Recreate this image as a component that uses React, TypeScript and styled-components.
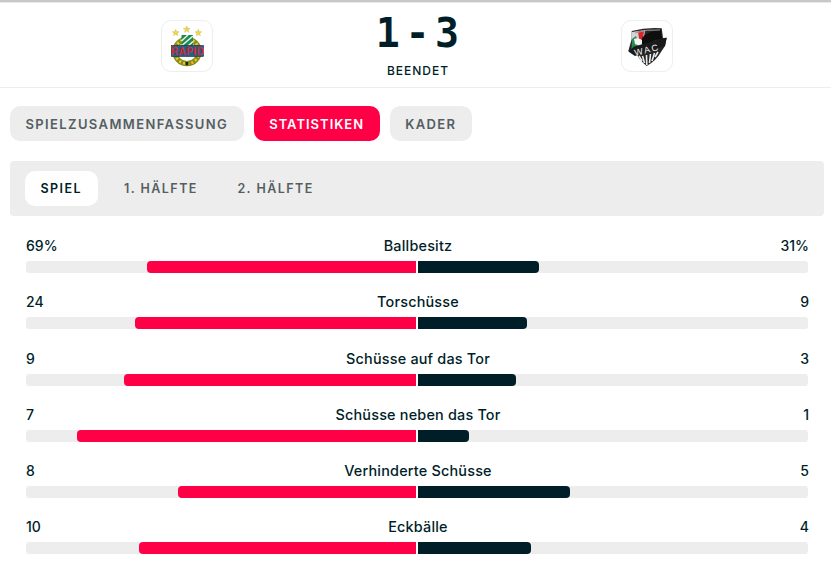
import React from "react";
import styled, { createGlobalStyle } from "styled-components";

const Global = createGlobalStyle`
  html, body { margin: 0; padding: 0; background: #fff; }
  body { font-family: Inter, "Liberation Sans", sans-serif; color: #001e28; }
`;
const Page = styled.div`
  width: 831px; height: 566px; overflow: hidden; background: #fff;
  display: flex; flex-direction: column;
`;
const TopLine = styled.div`height: 2px; background: #c8c8c8; flex: none; border-bottom: 1px solid #e8e8e8;`;
const Header = styled.header`
  height: 84px; flex: none; border-bottom: 1px solid #ededed;
  display: grid; grid-template-columns: 161px 52px 1fr 52px 158px; align-items: center;
`;
const Logo = styled.div`
  grid-column: ${p => p.$col}; width: 52px; height: 52px; box-sizing: border-box; border: 1px solid #eee; border-radius: 10px;
  display: flex; align-items: center; justify-content: center; margin-top: 2px;
`;
const Center = styled.div`
  grid-column: 3; display: flex; flex-direction: column; align-items: center; margin-left: 1px;
`;
const Score = styled.div`
  font-family: "DejaVu Sans Mono", "Liberation Mono", monospace; font-weight: 700; font-size: 40px; line-height: 44px;
  color: #001e28; display: flex; gap: 5.5px; margin-top: 0;
`;
const Status = styled.div`
  font-size: 12px; font-weight: 500; letter-spacing: 1px; line-height: 16px; margin-top: 8px; margin-left: 1px; color: #001e28;
`;
const Tabs = styled.nav`display: flex; gap: 10px; padding: 18px 10px 0; flex: none;`;
const Tab = styled.div`
  height: 35px; padding: 0 15.5px; border-radius: 10px; display: flex; align-items: center;
  font-size: 13px; font-weight: 600; letter-spacing: ${p => (p.$active ? "1px" : "1.38px")};
  background: ${p => (p.$active ? "#ff0046" : "#ededed")};
  color: ${p => (p.$active ? "#fff" : "#555e62")};
`;
const SubPanel = styled.div`
  margin: 20px 7px 0 10px; height: 55px; flex: none; background: #ededed; border-radius: 4px;
  display: flex; align-items: center; padding-left: 15px;
`;
const SubTab = styled.div`
  height: 35px; width: ${p => (p.$active ? "73px" : "auto")}; box-sizing: border-box; padding: 0 15.5px; margin-right: ${p => (p.$active ? "10.5px" : "8.5px")}; border-radius: 10px; display: flex; align-items: center;
  font-size: 12.5px; font-weight: 600; letter-spacing: 1.45px;
  background: ${p => (p.$active ? "#fff" : "transparent")};
  color: ${p => (p.$active ? "#001e28" : "#555e62")};
`;
const Stats = styled.section`padding: 20px 22px 0 26px; display: flex; flex-direction: column; flex: none;`;
const Row = styled.div`height: 56.25px; flex: none;`;
const Labels = styled.div`
  display: flex; justify-content: space-between; align-items: center; height: 19px; margin-bottom: 6px;
  font-size: 14px; line-height: 19px; font-weight: 500; color: #001e28;
`;
const Value = styled.span`width: 60px; text-align: ${p => (p.$right ? "right" : "left")};`;
const Name = styled.span`flex: 1; text-align: center; margin-left: 1px; font-size: 14.4px; letter-spacing: .2px;`;
const Track = styled.div`height: 12px; display: flex; gap: 2px; width: 782px;`;
const Half = styled.div`
  width: 390px; height: 12px; background: #ededed; display: flex;
  justify-content: ${p => (p.$home ? "flex-end" : "flex-start")};
  border-radius: ${p => (p.$home ? "3px 0 0 3px" : "0 3px 3px 0")};
`;
const Fill = styled.div`
  height: 12px; background: ${p => (p.$home ? "#ff0046" : "#001e28")};
  border-radius: ${p => (p.$home ? "4px 0 0 4px" : "0 4px 4px 0")};
`;

const stats = [
  { name: "Ballbesitz", a: "69%", b: "31%", h: 269, g: 121 },
  { name: "Torschüsse", a: "24", b: "9", h: 281, g: 109 },
  { name: "Schüsse auf das Tor", a: "9", b: "3", h: 292, g: 98 },
  { name: "Schüsse neben das Tor", a: "7", b: "1", h: 339, g: 51 },
  { name: "Verhinderte Schüsse", a: "8", b: "5", h: 238, g: 152 },
  { name: "Eckbälle", a: "10", b: "4", h: 277, g: 113 },
];

const Star = ({ x, y }: { x: number; y: number }) => (
  <polygon
    transform={`translate(${x} ${y})`}
    points="0,-3.4 .9,-1 3.4,-1 1.4,.5 2.1,3 0,1.5 -2.1,3 -1.4,.5 -3.4,-1 -.9,-1"
    fill="#f0dc3c" stroke="#a89a30" strokeWidth=".3"
  />
);

const RapidLogo = () => (
  <svg width="36" height="44" viewBox="0 0 36 44">
    <Star x={6.7} y={8.7} /><Star x={17.7} y={5.3} /><Star x={29.3} y={8.7} />
    <circle cx="18" cy="27.5" r="12.2" fill="#fff" stroke="#8f8a18" strokeWidth="5.2" />
    <circle cx="18" cy="27.5" r="12.2" fill="none" stroke="#d9cf3a" strokeWidth="2.6" strokeDasharray="2 2.2" />
    <path d="M12.5 11 H24 V22 H12.5Z" fill="#1d8a4e" />
    <path d="M12.5 17 L19 11 M13.5 21 L24 12 M19 22 L24 17.5" stroke="#e8f2ec" strokeWidth="1.6" />
    <rect x="2.5" y="21.5" width="32" height="11" fill="#1f6187" stroke="#10303f" strokeWidth=".6" />
    <text x="18.5" y="31" textAnchor="middle" fontFamily="Liberation Sans" fontWeight="700" fontSize="10" fill="#e01f2e" letterSpacing=".5">RAPID</text>
    <rect x="16.6" y="38" width="2.8" height="3.2" fill="#222" />
  </svg>
);

const WacLogo = () => (
  <svg width="40" height="44" viewBox="0 0 40 44">
    <path d="M4.7 7 Q20 3 34.7 4.3 L36 14 L39.7 13.7 L38 22 L34 28 Q29 37 19.7 42 Q12 36 8 27 L1.3 27 L4.7 15Z" fill="#262626" />
    <path d="M5 8 L18 6 L16 22 L5 25Z" fill="#d4d4d4" />
    <path d="M5 15 L9 12 L12 20 L10 24 L4.5 25Z" fill="#2a8a50" />
    <path d="M11 7.5 L17 6.5 L16 16 L12.5 18Z" fill="#d8242c" />
    <path d="M7 15 Q12 13 16 17 L13 22 L8 20Z" fill="#f4f4f4" />
    <path d="M15 14 Q22 6 34 6 L35 15 L28 16 L20 20 L15 23Z" fill="#0e0e0e" />
    <path d="M8 9 Q20 5 33 6" fill="none" stroke="#9a9a9a" strokeWidth="1" />
    <path d="M1.3 27.5 L7 22.5 L39.7 13.7 L38 22 L8 32Z" fill="#1a1a1a" />
    <text x="20.5" y="29" textAnchor="middle" fontFamily="Liberation Sans" fontWeight="400" fontSize="9" fill="#f2f2f2" letterSpacing="1.6" transform="rotate(-14 20 28)">WAC</text>
    <path d="M12 32 L15 37 M15.5 32 L17.5 39 M19.5 31 L19.8 41 M23.5 30 L22.5 39 M27.5 29 L25 37 M31 28 L28 33" stroke="#ececec" strokeWidth="1.6" />
  </svg>
);

export default function App() {
  return (
    <Page>
      <Global />
      <TopLine />
      <Header>
        <Logo $col={2}><RapidLogo /></Logo>
        <Center>
          <Score><span>1</span><span>-</span><span>3</span></Score>
          <Status>BEENDET</Status>
        </Center>
        <Logo $col={4}><WacLogo /></Logo>
      </Header>
      <Tabs>
        <Tab>SPIELZUSAMMENFASSUNG</Tab>
        <Tab $active>STATISTIKEN</Tab>
        <Tab>KADER</Tab>
      </Tabs>
      <SubPanel>
        <SubTab $active>SPIEL</SubTab>
        <SubTab>1. HÄLFTE</SubTab>
        <SubTab>2. HÄLFTE</SubTab>
      </SubPanel>
      <Stats>
        {stats.map(s => (
          <Row key={s.name}>
            <Labels>
              <Value>{s.a}</Value>
              <Name>{s.name}</Name>
              <Value $right>{s.b}</Value>
            </Labels>
            <Track>
              <Half $home><Fill $home style={{ width: s.h }} /></Half>
              <Half><Fill style={{ width: s.g }} /></Half>
            </Track>
          </Row>
        ))}
      </Stats>
    </Page>
  );
}
